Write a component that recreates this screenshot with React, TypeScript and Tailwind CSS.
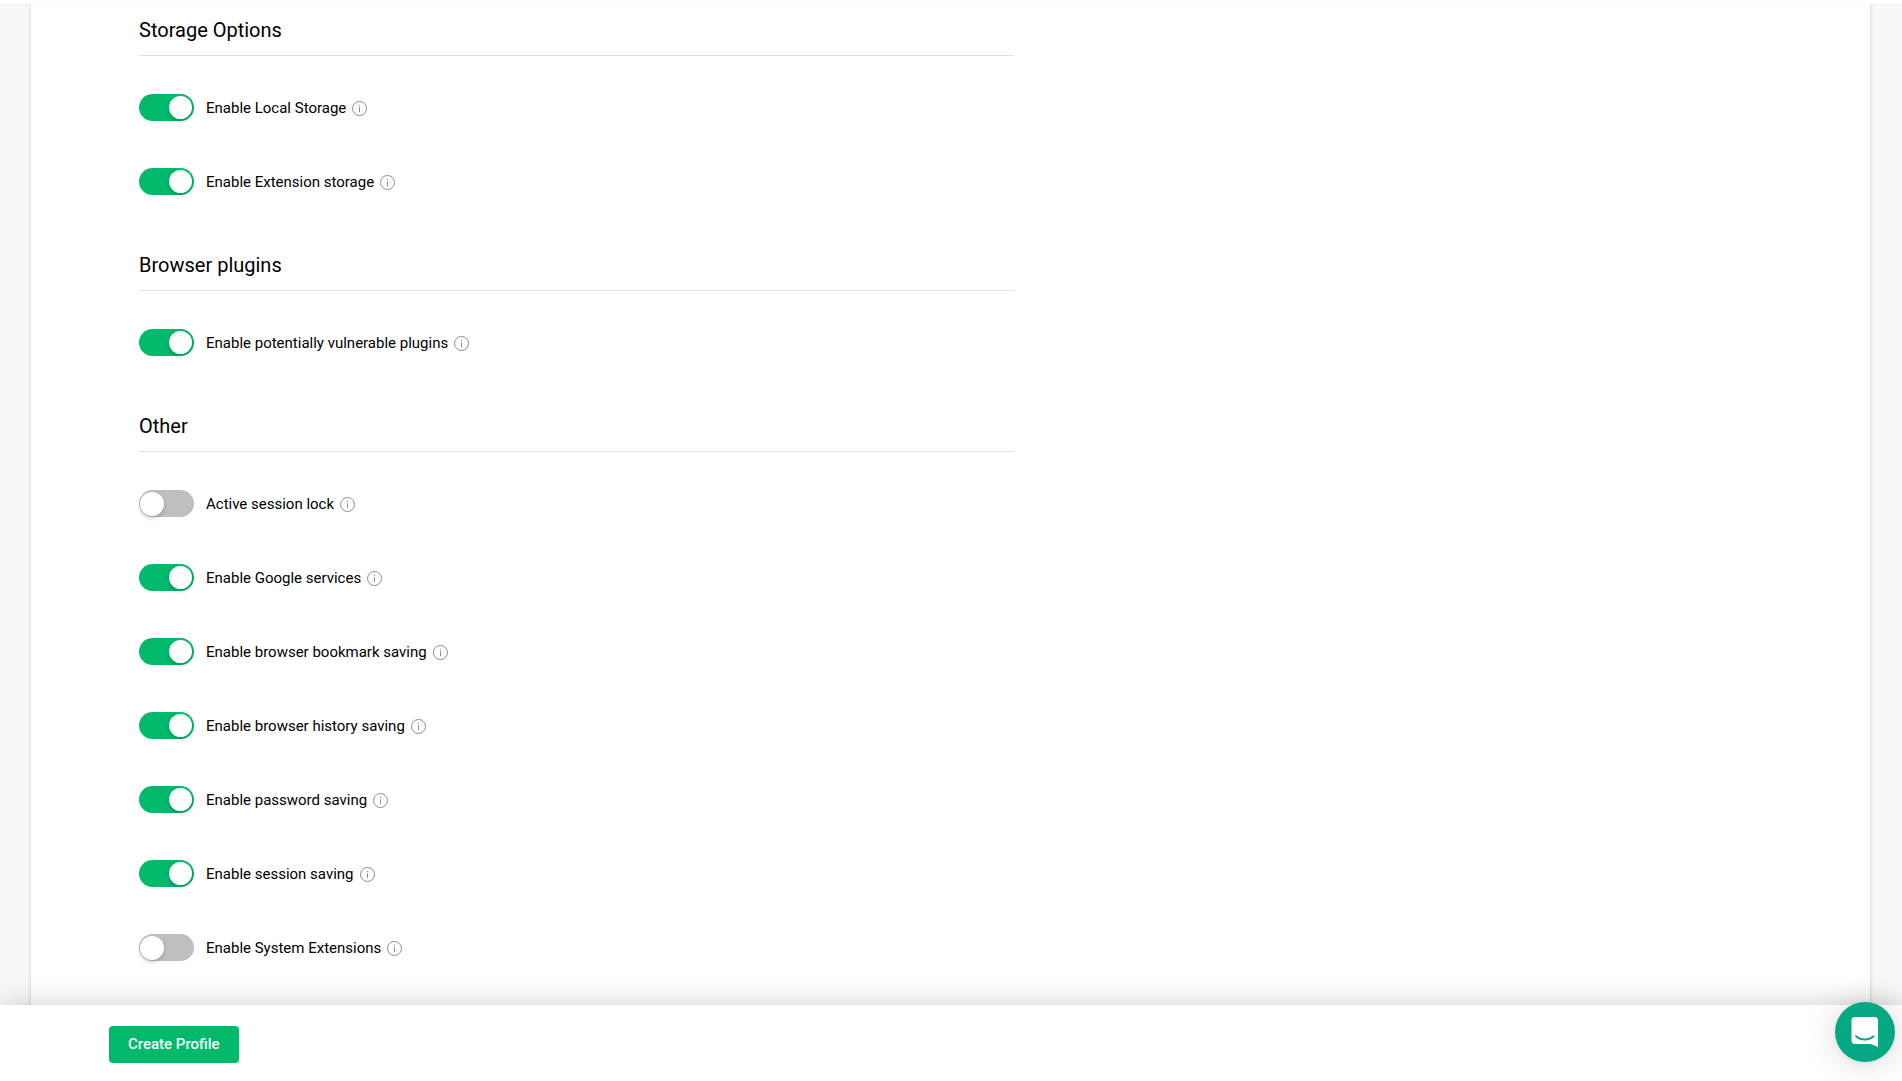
import { useState } from 'react';

type Option = { id: string; label: string; on: boolean };
type Section = { title: string; options: Option[] };

const sections: Section[] = [
  {
    title: 'Storage Options',
    options: [
      { id: 'local-storage', label: 'Enable Local Storage', on: true },
      { id: 'extension-storage', label: 'Enable Extension storage', on: true },
    ],
  },
  {
    title: 'Browser plugins',
    options: [{ id: 'plugins', label: 'Enable potentially vulnerable plugins', on: true }],
  },
  {
    title: 'Other',
    options: [
      { id: 'session-lock', label: 'Active session lock', on: false },
      { id: 'google-services', label: 'Enable Google services', on: true },
      { id: 'bookmarks', label: 'Enable browser bookmark saving', on: true },
      { id: 'history', label: 'Enable browser history saving', on: true },
      { id: 'passwords', label: 'Enable password saving', on: true },
      { id: 'sessions', label: 'Enable session saving', on: true },
      { id: 'system-extensions', label: 'Enable System Extensions', on: false },
    ],
  },
];

function InfoIcon() {
  return (
    <svg width="15" height="15" viewBox="0 0 15 15" fill="none" stroke="#8c8c8c" aria-hidden="true">
      <circle cx="7.5" cy="7.5" r="7" />
      <path d="M7.5 6.2V11.2" />
      <path d="M7.5 3.8V5" />
    </svg>
  );
}

function ToggleRow({ option }: { option: Option }) {
  const [checked, setChecked] = useState(option.on);
  return (
    <div className="flex h-[27px] items-center">
      <input
        id={option.id}
        type="checkbox"
        role="switch"
        checked={checked}
        onChange={(e) => setChecked(e.target.checked)}
        className="flex h-[27px] w-[55px] shrink-0 cursor-pointer appearance-none items-center rounded-full bg-[#bfbfbf] px-px before:block before:size-6 before:rounded-full before:bg-white before:shadow-[0_2px_4px_rgba(0,0,0,0.2)] checked:justify-end checked:bg-[#00b96b] checked:px-0.5 checked:before:size-[23px]"
      />
      <label htmlFor={option.id} className="ml-3 cursor-pointer text-[15px] leading-6 text-black">
        {option.label}
      </label>
      <button type="button" aria-label={'About: ' + option.label} className="mt-0.5 ml-1.5 cursor-pointer">
        <InfoIcon />
      </button>
    </div>
  );
}

function ChatIcon() {
  return (
    <svg width="28" height="32" viewBox="0 0 28 32" fill="none" aria-hidden="true">
      <path
        d="M4 1H23.5A3.5 3.5 0 0 1 27 4.5V31C27 31 23.6 29.4 19.4 28H4A3.5 3.5 0 0 1 .5 24.5V4.5A3.5 3.5 0 0 1 4 1Z"
        fill="#fff"
      />
      <path d="M5 20.2C10.2 24.6 17.4 24.6 22.6 20.2" stroke="#06a883" strokeWidth="1.8" strokeLinecap="round" />
    </svg>
  );
}

export default function App() {
  return (
    <div className="flex h-screen flex-col overflow-hidden bg-[#f8f8f8] font-[Roboto,sans-serif] text-black">
      <header className="relative h-1 shrink-0 bg-white shadow-[0_1px_1px_rgba(0,0,0,0.03)]" />
      <main className="flex min-h-0 flex-1 flex-col overflow-hidden pr-8 pl-[31px]">
        <div className="flex-1 bg-white px-[108px] pt-[11px] shadow-[0_0_4px_rgba(0,0,0,0.18)]">
          {sections.map((section) => (
            <section key={section.title} className="w-full max-w-[875px] pb-[55px]">
              <h2 className="border-b border-[#e2e2e2] pb-[10px] text-xl leading-[30px]">{section.title}</h2>
              <div className="flex flex-col gap-[47px] pt-[38px]">
                {section.options.map((option) => (
                  <ToggleRow key={option.id} option={option} />
                ))}
              </div>
            </section>
          ))}
        </div>
      </main>
      <footer className="relative flex h-[76px] shrink-0 items-center bg-white pt-0.5 pl-[109px] shadow-[0_0_30px_rgba(0,0,0,0.2)]">
        <button
          type="button"
          className="h-[37px] cursor-pointer rounded bg-[#00b96b] px-[19px] text-[15px] leading-6 font-medium text-white"
        >
          Create Profile
        </button>
      </footer>
      <button
        type="button"
        aria-label="Open chat"
        className="fixed right-[7px] bottom-[19px] flex size-[60px] cursor-pointer items-center justify-center rounded-full bg-[#06a883] shadow-[0_1px_6px_rgba(0,0,0,0.06),0_2px_32px_rgba(0,0,0,0.16)]"
      >
        <ChatIcon />
      </button>
    </div>
  );
}
